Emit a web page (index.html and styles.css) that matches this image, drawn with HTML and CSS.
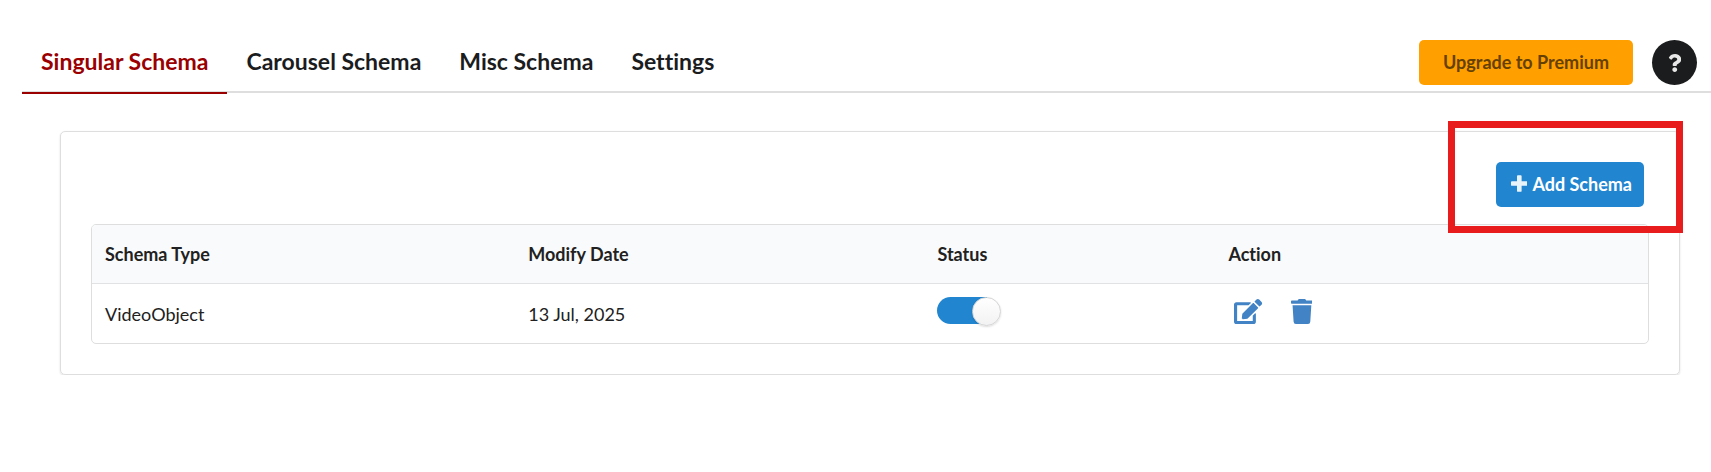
FILE: index.html
```
<!DOCTYPE html>
<html lang="en">
<head>
  <meta charset="UTF-8">
  <meta name="viewport" content="width=device-width, initial-scale=1">
  <title>Singular Schema</title>
  <link rel="stylesheet" href="styles.css">
</head>
<body>
  <header class="topbar">
    <nav class="tabs">
      <a href="#singular" class="tab active">Singular Schema</a>
      <a href="#carousel" class="tab">Carousel Schema</a>
      <a href="#misc" class="tab">Misc Schema</a>
      <a href="#settings" class="tab">Settings</a>
    </nav>
    <div class="topbar-actions">
      <button type="button" class="btn upgrade">Upgrade to Premium</button>
      <button type="button" class="help" aria-label="Help">
        <svg viewBox="0 0 384 512" aria-hidden="true"><path d="M202.021 0C122.202 0 70.503 32.703 29.914 91.026c-7.363 10.58-5.093 25.086 5.178 32.874l43.138 32.709c10.373 7.865 25.132 6.026 33.253-4.148 25.049-31.381 43.63-49.449 82.757-49.449 30.764 0 68.816 19.799 68.816 49.631 0 22.552-18.617 34.134-48.993 51.164-35.423 19.86-82.299 44.576-82.299 106.405V320c0 13.255 10.745 24 24 24h72.471c13.255 0 24-10.745 24-24v-5.773c0-42.86 125.268-44.645 125.268-160.627C377.504 66.256 286.902 0 202.021 0zM192 373.459c-38.196 0-69.271 31.075-69.271 69.271 0 38.195 31.075 69.27 69.271 69.27s69.271-31.075 69.271-69.271-31.075-69.27-69.271-69.27z"/></svg>
      </button>
    </div>
  </header>

  <main class="card">
    <div class="card-actions">
      <div class="highlight">
        <button type="button" class="btn add">
          <svg viewBox="0 0 448 512" aria-hidden="true"><path d="M448 294.2v-76.4c0-13.3-10.7-24-24-24H286.2V56c0-13.3-10.7-24-24-24h-76.4c-13.3 0-24 10.7-24 24v137.8H24c-13.3 0-24 10.7-24 24v76.4c0 13.3 10.7 24 24 24h137.8V456c0 13.3 10.7 24 24 24h76.4c13.3 0 24-10.7 24-24V318.2H424c13.3 0 24-10.7 24-24z"/></svg>
          Add Schema
        </button>
      </div>
    </div>

    <table class="schemas">
      <thead>
        <tr>
          <th class="col-type">Schema Type</th>
          <th class="col-date">Modify Date</th>
          <th class="col-status">Status</th>
          <th>Action</th>
        </tr>
      </thead>
      <tbody>
        <tr>
          <td>VideoObject</td>
          <td>13 Jul, 2025</td>
          <td><input type="checkbox" class="toggle" aria-label="Status" checked></td>
          <td>
            <div class="row-actions">
              <button type="button" class="icon-btn" aria-label="Edit">
                <svg class="edit" viewBox="0 0 576 512" aria-hidden="true"><path d="M402.6 83.2l90.2 90.2c3.8 3.8 3.8 10 0 13.8L274.4 405.6l-92.8 10.3c-12.4 1.4-22.9-9.1-21.5-21.5l10.3-92.8L388.8 83.2c3.8-3.8 10-3.8 13.8 0zm162-22.9l-48.8-48.8c-15.2-15.2-39.9-15.2-55.2 0l-35.4 35.4c-3.8 3.8-3.8 10 0 13.8l90.2 90.2c3.8 3.8 10 3.8 13.8 0l35.4-35.4c15.2-15.3 15.2-40 0-55.2zM384 346.2V448H64V128h229.8c3.2 0 6.2-1.3 8.5-3.5l40-40c7.6-7.6 2.2-20.5-8.5-20.5H48C21.5 64 0 85.5 0 112v352c0 26.5 21.5 48 48 48h352c26.5 0 48-21.5 48-48V306.2c0-10.7-12.9-16-20.5-8.5l-40 40c-2.2 2.3-3.5 5.3-3.5 8.5z"/></svg>
              </button>
              <button type="button" class="icon-btn" aria-label="Delete">
                <svg class="trash" viewBox="0 0 448 512" aria-hidden="true"><path d="M432 32H312l-9.4-18.7A24 24 0 0 0 281.1 0H166.8a23.72 23.72 0 0 0-21.4 13.3L136 32H16A16 16 0 0 0 0 48v32a16 16 0 0 0 16 16h416a16 16 0 0 0 16-16V48a16 16 0 0 0-16-16zM53.2 467a48 48 0 0 0 47.9 45h245.8a48 48 0 0 0 47.9-45L416 128H32z"/></svg>
              </button>
            </div>
          </td>
        </tr>
      </tbody>
    </table>
  </main>
</body>
</html>
```
FILE: styles.css
```
* {
  box-sizing: border-box;
}
body {
  margin: 0;
  padding: 32px 0 0 22px;
  background: #fff;
  color: #212121;
  font-family: Lato, 'Helvetica Neue', Arial, sans-serif;
  font-size: 18px;
  font-variant-ligatures: none;
  line-height: 24px;
}
button {
  border: none;
  font-family: inherit;
  cursor: pointer;
}
svg {
  display: block;
  fill: currentColor;
}

/* Top bar */
.topbar {
  display: flex;
  justify-content: space-between;
  align-items: flex-end;
  border-bottom: 2px solid #dededf;
}
.tabs {
  display: flex;
}
.tab {
  padding: 16px 19px 17px;
  margin-bottom: -3px;
  border-bottom: 2px solid transparent;
  color: #1b1c1d;
  font-size: 23px;
  font-weight: 700;
  line-height: 27px;
  text-decoration: none;
}
.tab.active {
  color: #9a0000;
  border-color: #9a0000;
}
.topbar-actions {
  display: flex;
  gap: 19px;
  padding: 0 14px 6px 0;
}
.btn {
  height: 45px;
  border-radius: 5px;
  font-size: 18px;
  font-weight: 700;
}
.upgrade {
  padding: 0 24px 2px;
  background: #ffa000;
  color: #664000;
}
.help {
  display: flex;
  justify-content: center;
  align-items: center;
  width: 45px;
  height: 45px;
  padding: 0;
  border-radius: 50%;
  background: #1b1c1d;
  color: #e8e8e8;
}
.help svg {
  height: 18px;
}

/* Card */
.card {
  margin: 38px 31px 0 38px;
  padding: 30px;
  border: 1px solid #dededf;
  border-radius: 5px;
  box-shadow: 0 1px 2px rgba(34, 36, 38, 0.15);
}
.card-actions {
  display: flex;
  justify-content: flex-end;
  padding: 0 5px 17px 0;
}
.highlight {
  position: relative;
}
.highlight::after {
  content: '';
  position: absolute;
  inset: -41px -39px -26px -48px;
  border: 7px solid #e81c1c;
  pointer-events: none;
}
.add {
  display: flex;
  align-items: center;
  gap: 5px;
  padding: 0 12px 2px 15px;
  background: #2185d0;
  color: #fff;
}
.add svg {
  height: 19px;
  opacity: 0.9;
}

/* Table */
.schemas {
  width: 100%;
  border: 1px solid #dededf;
  border-radius: 5px;
  border-collapse: separate;
  border-spacing: 0;
  text-align: left;
}
.schemas th,
.schemas td {
  height: 59px;
  padding: 0 13px;
}
.schemas th {
  background: #f9fafb;
  border-bottom: 1px solid #e1e2e3;
  font-weight: 700;
}
.schemas th:first-child {
  border-top-left-radius: 4px;
}
.schemas th:last-child {
  border-top-right-radius: 4px;
}
.col-type {
  width: 27.2%;
}
.col-date {
  width: 26.3%;
}
.col-status {
  width: 18.7%;
}
.toggle {
  appearance: none;
  display: flex;
  justify-content: flex-end;
  width: 64px;
  height: 27px;
  margin: 0 0 6px;
  border-radius: 14px;
  background: linear-gradient(90deg, #2185d0 50px, transparent 50px);
  cursor: pointer;
}
.toggle:not(:checked) {
  justify-content: flex-start;
  background: #e0e0e0;
}
.toggle::before {
  content: '';
  width: 27px;
  height: 27px;
  border: 1px solid #d4d4d5;
  border-radius: 50%;
  background: linear-gradient(#fff, #f2f2f2);
  box-shadow: 0 1px 2px rgba(34, 36, 38, 0.15);
}
.row-actions {
  display: flex;
  gap: 28px;
  padding: 0 0 4px 6px;
}
.icon-btn {
  padding: 0;
  background: none;
  color: #4183c4;
}
.icon-btn svg {
  height: 25px;
}
```
